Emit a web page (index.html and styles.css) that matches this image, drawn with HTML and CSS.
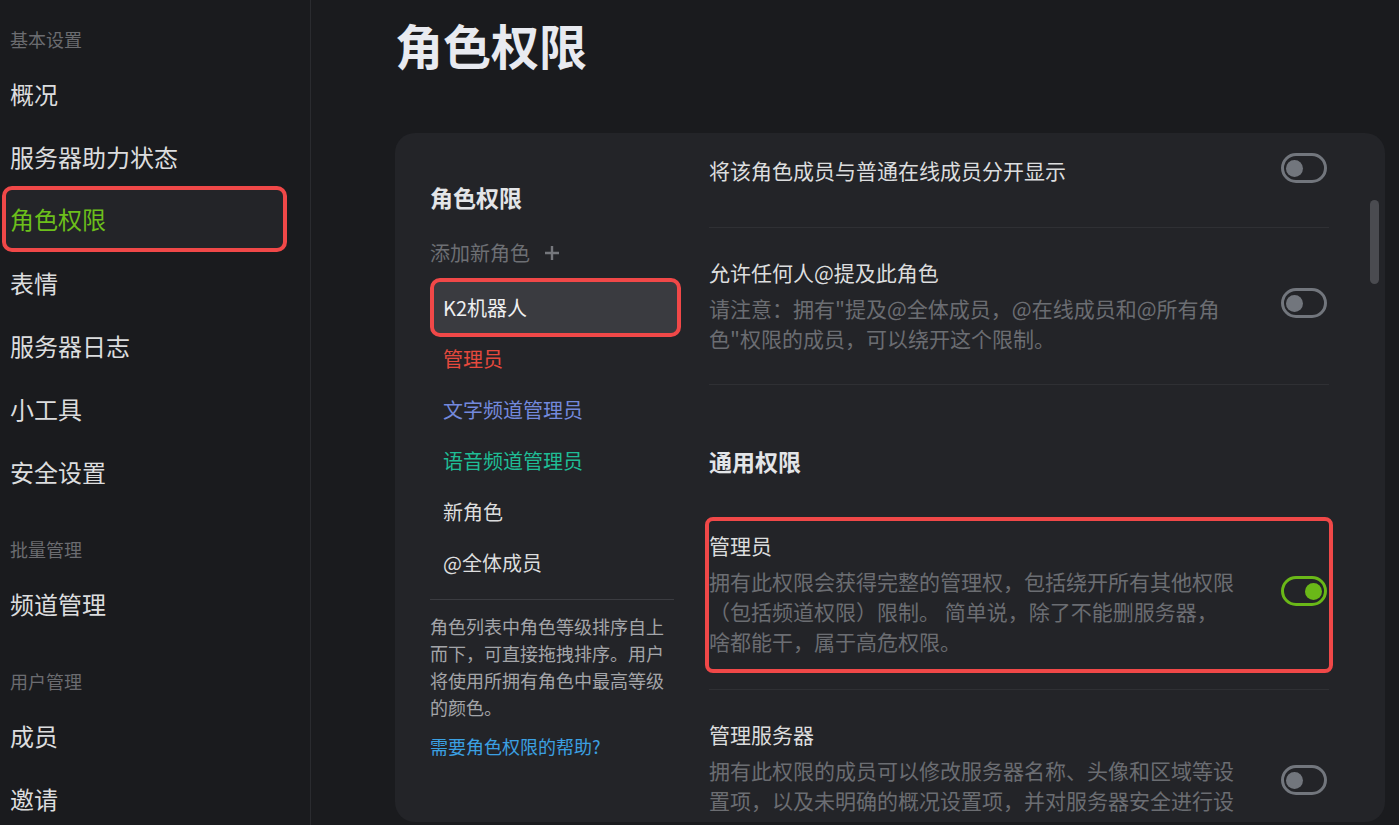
FILE: index.html
```html
<html>

<head>
  <meta name="viewport" content="width=device-width, initial-scale=1.0">
  <link rel="stylesheet" href="styles.css">
</head>

<body>
  <aside class="side">
    <div class="group">
      <i>基本设置</i>
      <a class="nav">概况</a>
      <a class="nav">服务器助力状态</a>
      <a class="nav select">角色权限</a>
      <a class="nav">表情</a>
      <a class="nav">服务器日志</a>
      <a class="nav">小工具</a>
      <a class="nav">安全设置</a>
    </div>
    <div class="group">
      <i>批量管理</i>
      <a class="nav">频道管理</a>
    </div>
    <div class="group">
      <i>用户管理</i>
      <a class="nav">成员</a>
      <a class="nav">邀请</a>
    </div>
  </aside>

  <main class="main">
    <h1 class="page-title">角色权限</h1>
    <section class="card">
      <div class="roles">
        <h2>角色权限</h2>
        <div class="role-add">添加新角色
          <svg width="16" height="16" viewBox="0 0 16 16"><path d="M8 1v14M1 8h14" stroke="#75777c" stroke-width="2.4" /></svg>
        </div>
        <div class="role-list">
          <a class="role select">K2机器人</a>
          <a class="role admin">管理员</a>
          <a class="role text">文字频道管理员</a>
          <a class="role voice">语音频道管理员</a>
          <a class="role">新角色</a>
          <a class="role">@全体成员</a>
        </div>
        <p class="role-tip">角色列表中角色等级排序自上而下，可直接拖拽排序。用户将使用所拥有角色中最高等级的颜色。</p>
        <a class="role-help">需要角色权限的帮助?</a>
      </div>

      <div class="perms">
        <div class="perm first">
          <div class="perm-body">
            <div class="perm-text">
              <b>将该角色成员与普通在线成员分开显示</b>
            </div>
            <span class="toggle"></span>
          </div>
        </div>
        <div class="perm">
          <div class="perm-body">
            <div class="perm-text">
              <b>允许任何人@提及此角色</b>
              <em>请注意：拥有"提及@全体成员，@在线成员和@所有角色"权限的成员，可以绕开这个限制。</em>
            </div>
            <span class="toggle"></span>
          </div>
        </div>
        <h3>通用权限</h3>
        <div class="perm marked">
          <div class="perm-body">
            <div class="perm-text">
              <b>管理员</b>
              <em>拥有此权限会获得完整的管理权，包括绕开所有其他权限（包括频道权限）限制。 简单说，除了不能删服务器，啥都能干，属于高危权限。</em>
            </div>
            <span class="toggle on"></span>
          </div>
        </div>
        <div class="perm">
          <div class="perm-body">
            <div class="perm-text">
              <b>管理服务器</b>
              <em>拥有此权限的成员可以修改服务器名称、头像和区域等设置项，以及未明确的概况设置项，并对服务器安全进行设置。</em>
            </div>
            <span class="toggle"></span>
          </div>
        </div>
      </div>

      <div class="scroll"></div>
    </section>
  </main>
</body>

</html>
```

FILE: styles.css
```css
html,
body {
  margin: 0;
  padding: 0;
  background: #1a1b1e;
}

body {
  display: flex;
  height: 825px;
  overflow: hidden;
  font-family: "Noto Sans CJK SC", "Microsoft YaHei", sans-serif;
  color: #dcddde;
}

a {
  display: block;
  cursor: pointer;
}

/* sidebar */

.side {
  flex: none;
  width: 311px;
  padding-top: 17px;
  border-right: 1px solid #2a2b2f;
  box-sizing: border-box;
}

.group+.group {
  margin-top: 24px;
}

.group i {
  display: block;
  height: 45px;
  line-height: 45px;
  padding-left: 10px;
  font-size: 18px;
  font-style: normal;
  color: #6b6c70;
}

.nav {
  height: 63px;
  line-height: 63px;
  padding-left: 10px;
  font-size: 24px;
  color: #dcddde;
}

.nav.select {
  height: 58px;
  line-height: 58px;
  margin: 2px 27px 3px 6px;
  padding-left: 4px;
  color: #6cbf1b;
  background: #232428;
  border-radius: 6px;
  outline: 4px solid #f04848;
}

/* main */

.main {
  flex: 1;
  padding: 0 14px 0 84px;
}

.page-title {
  margin: 14px 0 0;
  height: 60px;
  line-height: 60px;
  font-size: 48px;
  font-weight: bold;
  color: #e8eaf0;
}

.card {
  display: flex;
  height: 689px;
  margin-top: 59px;
  padding: 0 5px 0 35px;
  box-sizing: border-box;
  overflow: hidden;
  background: #232428;
  border-radius: 20px;
}

/* role column */

.roles {
  flex: none;
  width: 244px;
  padding-top: 49px;
}

.roles h2 {
  margin: 0;
  line-height: 30px;
  font-size: 23px;
  font-weight: bold;
  color: #e3e5e8;
}

.role-add {
  display: flex;
  align-items: center;
  margin-top: 26px;
  line-height: 30px;
  font-size: 20px;
  color: #6d6f74;
}

.role-add svg {
  margin-left: 14px;
}

.role-list {
  margin-top: 14px;
}

.role {
  height: 51px;
  line-height: 51px;
  padding-left: 13px;
  font-size: 20px;
  color: #dcddde;
}

.role.select {
  margin: 0 -3px 0 4px;
  padding-left: 9px;
  color: #eeeff1;
  background: #3a3b40;
  border-radius: 6px;
  outline: 4px solid #f04848;
}

.role.admin {
  color: #e5493d;
}

.role.text {
  color: #7389dc;
}

.role.voice {
  color: #1fbc95;
}

.role-tip {
  margin: 11px 0 0;
  padding-top: 13px;
  border-top: 1px solid #3b3c41;
  line-height: 27px;
  font-size: 18px;
  color: #a3a5a9;
}

.role-help {
  margin-top: 12px;
  line-height: 27px;
  font-size: 18px;
  color: #3ba0e2;
}

/* permission column */

.perms {
  flex: none;
  width: 620px;
  margin-left: 35px;
}

.perm {
  padding: 29px 0 31px;
  border-bottom: 1px solid #2f3034;
}

.perm.first {
  padding: 22px 0 42px;
}

.perm.marked {
  padding: 44px 0 20px;
}

.perm.marked+.perm {
  padding-top: 29px;
}

.perm-body {
  display: flex;
  align-items: center;
  justify-content: space-between;
  padding-right: 2px;
}

.marked .perm-body {
  padding-top: 9px;
  padding-bottom: 13px;
  border-radius: 4px;
  outline: 4px solid #f04848;
}

.perm-text {
  max-width: 527px;
}

.perm-text b {
  display: block;
  line-height: 30px;
  font-size: 21px;
  font-weight: normal;
  color: #dcddde;
}

.perm-text em {
  display: block;
  margin-top: 6px;
  line-height: 30px;
  font-size: 21px;
  font-style: normal;
  color: #6b6d72;
}

.perms h3 {
  margin: 60px 0 0;
  line-height: 32px;
  font-size: 23px;
  font-weight: bold;
  color: #e3e5e8;
}

.toggle {
  flex: none;
  display: flex;
  align-items: center;
  width: 46px;
  height: 30px;
  margin: -2px 0 2px;
  padding: 0 2px;
  box-sizing: border-box;
  border: 3px solid #72767d;
  border-radius: 15px;
}

.toggle::before {
  content: "";
  width: 17px;
  height: 17px;
  border-radius: 50%;
  background: #72767d;
}

.toggle.on {
  justify-content: flex-end;
  border-color: #6ab818;
}

.toggle.on::before {
  background: #6ab818;
}

.scroll {
  flex: none;
  width: 9px;
  height: 84px;
  margin: 67px 0 0 41px;
  background: #4a4b50;
  border-radius: 5px;
}
```
